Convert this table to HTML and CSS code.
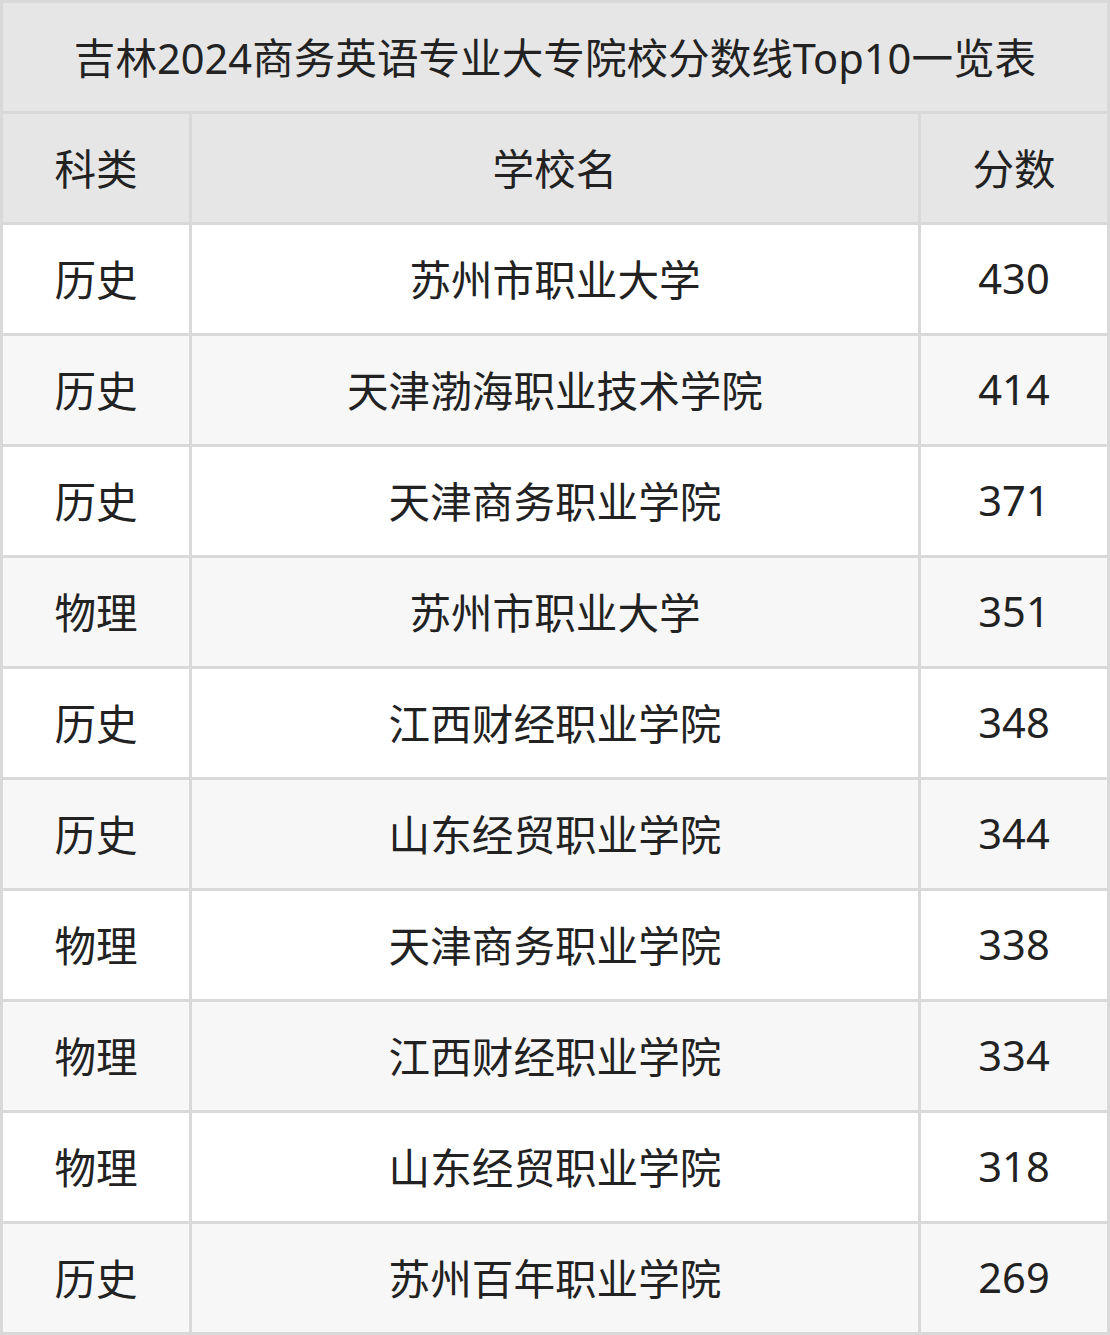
FILE: index.html
```html
<!DOCTYPE html>
<html lang="zh-CN">
<head>
<meta charset="utf-8">
<link rel="stylesheet" href="styles.css">
</head>
<body>
<div class="table">
  <div class="title">吉林2024商务英语专业大专院校分数线Top10一览表</div>
  <div class="cell head">科类</div><div class="cell head">学校名</div><div class="cell head">分数</div>
  <div class="cell">历史</div><div class="cell">苏州市职业大学</div><div class="cell">430</div>
  <div class="cell alt">历史</div><div class="cell alt">天津渤海职业技术学院</div><div class="cell alt">414</div>
  <div class="cell">历史</div><div class="cell">天津商务职业学院</div><div class="cell">371</div>
  <div class="cell alt">物理</div><div class="cell alt">苏州市职业大学</div><div class="cell alt">351</div>
  <div class="cell">历史</div><div class="cell">江西财经职业学院</div><div class="cell">348</div>
  <div class="cell alt">历史</div><div class="cell alt">山东经贸职业学院</div><div class="cell alt">344</div>
  <div class="cell">物理</div><div class="cell">天津商务职业学院</div><div class="cell">338</div>
  <div class="cell alt">物理</div><div class="cell alt">江西财经职业学院</div><div class="cell alt">334</div>
  <div class="cell">物理</div><div class="cell">山东经贸职业学院</div><div class="cell">318</div>
  <div class="cell alt">历史</div><div class="cell alt">苏州百年职业学院</div><div class="cell alt">269</div>
</div>
</body>
</html>
```

FILE: styles.css
```css
html, body {
  margin: 0;
  padding: 0;
  background: #ffffff;
}
.table {
  width: 1110px;
  box-sizing: border-box;
  display: grid;
  grid-template-columns: 186px 726px 186px;
  grid-auto-rows: 108px;
  gap: 3px;
  padding: 3px;
  background: #d9d9d9;
  font-family: "Noto Sans", "Noto Sans CJK SC", sans-serif;
  color: #222222;
}
.title {
  grid-column: 1 / 4;
  background: #e6e6e6;
  display: flex;
  align-items: center;
  justify-content: center;
  font-size: 41.6px;
  padding-bottom: 2px;
}
.cell {
  background: #ffffff;
  display: flex;
  align-items: center;
  justify-content: center;
  font-size: 41.6px;
  padding-bottom: 2px;
}
.cell.head {
  background: #e6e6e6;
}
.cell.alt {
  background: #f7f7f7;
}
```
